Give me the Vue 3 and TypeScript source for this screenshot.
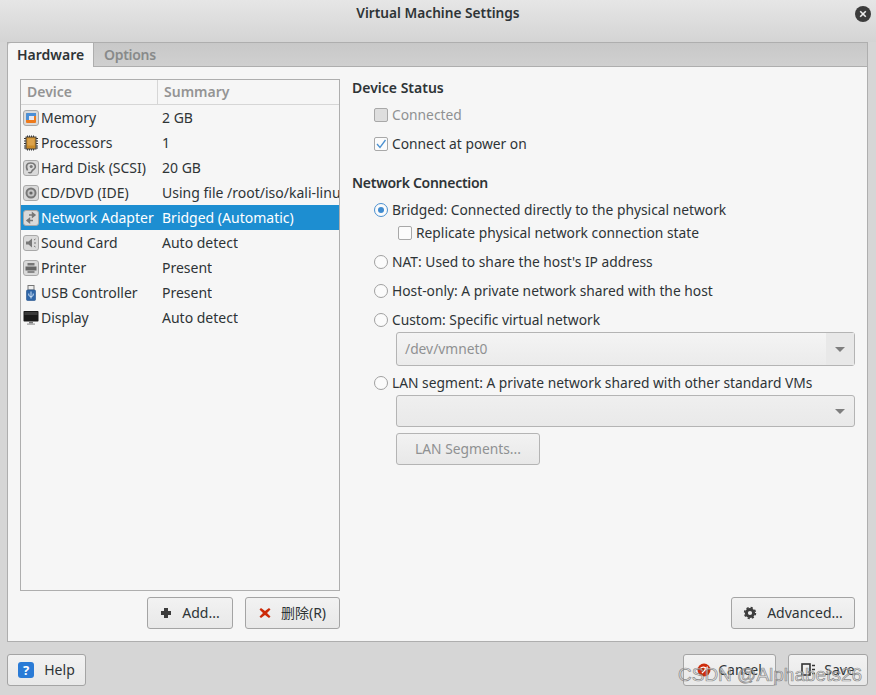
<script setup lang="ts">
interface Device { id: string; name: string; summary: string; selected?: boolean }
const devices: Device[] = [
  { id: 'memory', name: 'Memory', summary: '2 GB' },
  { id: 'cpu', name: 'Processors', summary: '1' },
  { id: 'disk', name: 'Hard Disk (SCSI)', summary: '20 GB' },
  { id: 'cd', name: 'CD/DVD (IDE)', summary: 'Using file /root/iso/kali-linux' },
  { id: 'net', name: 'Network Adapter', summary: 'Bridged (Automatic)', selected: true },
  { id: 'sound', name: 'Sound Card', summary: 'Auto detect' },
  { id: 'printer', name: 'Printer', summary: 'Present' },
  { id: 'usb', name: 'USB Controller', summary: 'Present' },
  { id: 'display', name: 'Display', summary: 'Auto detect' },
]
const framed = ['memory', 'disk', 'cd', 'net', 'sound', 'printer']
</script>

<template>
  <div class="window">
    <header class="titlebar">
      <span class="title">Virtual Machine Settings</span>
      <span class="close">
        <svg width="16" height="16" viewBox="0 0 16 16"><circle cx="8" cy="8" r="8" fill="#3c3c3c" /><path d="M5.2 5.2l5.6 5.6M10.8 5.2l-5.6 5.6" stroke="#eee" stroke-width="1.6" /></svg>
      </span>
    </header>

    <section class="notebook">
      <div class="tabs">
        <div class="tab active">Hardware</div>
        <div class="tab">Options</div>
      </div>
      <div class="page">
        <div class="left">
          <div class="list">
            <div class="list-head">
              <div class="head-device">Device</div>
              <div class="head-summary">Summary</div>
            </div>
            <div v-for="d in devices" :key="d.id" class="row" :class="{ selected: d.selected }">
              <div class="cell-device">
                <svg class="icon" width="16" height="16" viewBox="0 0 16 16">
                  <rect v-if="framed.includes(d.id)" x="0.5" y="0.5" width="15" height="15" rx="2.5" fill="#dadada" stroke="#a8a8a8" />
                  <template v-if="d.id === 'memory'">
                    <rect x="3" y="3" width="10" height="10" rx="1" fill="#ee7a1c" />
                    <path d="M3 4a1 1 0 0 1 1-1h9v3H6v4H3z" fill="#4b8fd6" />
                    <rect x="6" y="6" width="5" height="4" fill="#e8e8f0" />
                  </template>
                  <template v-else-if="d.id === 'cpu'">
                    <path d="M1 3.500h14M1 6h14M1 8.500h14M1 11h14M1 13h14" stroke="#333" stroke-width="1" />
                    <path d="M4.500 .5v15M6.500 .5v15M8.500 .5v15M10.500 .5v15" stroke="#333" stroke-width="1" />
                    <rect x="2.500" y="1.500" width="11" height="13" fill="#444" />
                    <rect x="3.500" y="2.500" width="9" height="11" fill="#c98a28" />
                    <rect x="4.500" y="3.500" width="7" height="7" fill="#dca24a" />
                  </template>
                  <template v-else-if="d.id === 'disk'">
                    <path d="M4.500 10.500c-1.200-2.500-1.500-4-.5-5.800C5 2.600 10.200 2.400 11.800 4.800c1.100 1.800.4 3.600-1 4.400-1.300.7-1.800 1.300-2.300 2.600-.5 1.100-2.300 1.400-3.100.3" fill="none" stroke="#777" stroke-width="1.600" />
                    <circle cx="8.200" cy="6.600" r="1.500" fill="#777" />
                  </template>
                  <template v-else-if="d.id === 'cd'">
                    <circle cx="8" cy="8" r="5.500" fill="#777" />
                    <circle cx="8" cy="8" r="3.500" fill="#c4c4c4" />
                    <circle cx="8" cy="8" r="1.600" fill="#666" />
                  </template>
                  <template v-else-if="d.id === 'net'">
                    <path d="M6 5h5.500M9.500 3l2.500 2-2.500 2zM10 10.500H4.500M6.500 8.500l-2.500 2 2.500 2z" fill="#777" stroke="#777" stroke-width="1.400" />
                  </template>
                  <template v-else-if="d.id === 'sound'">
                    <path d="M3 6.500h2.500L9 3.500v9l-3.500-3H3z" fill="#777" />
                    <path d="M11 5l1.500-1M11 8h2M11 11l1.500 1" stroke="#777" stroke-width="1" />
                  </template>
                  <template v-else-if="d.id === 'printer'">
                    <rect x="4.500" y="3" width="7" height="2.500" fill="#777" />
                    <rect x="2.500" y="6.500" width="11" height="4" fill="#666" />
                    <rect x="4.500" y="11" width="7" height="2" fill="#888" />
                  </template>
                  <template v-else-if="d.id === 'usb'">
                    <rect x="5" y="0.500" width="6" height="4.500" fill="#eee" stroke="#777" />
                    <rect x="3.500" y="5" width="9" height="10.500" rx="1" fill="#2f66a8" stroke="#24508a" stroke-width="0.600" />
                    <path d="M8 6.500v7M5.800 8.500v2l2.200 1.500 2.200-1.500v-2" fill="none" stroke="#cfe2f6" stroke-width="1" />
                  </template>
                  <template v-else-if="d.id === 'display'">
                    <rect x="0.500" y="1" width="15" height="10.500" rx="0.800" fill="#1a1a1a" />
                    <rect x="1.500" y="2" width="13" height="3" fill="#3a3a3a" />
                    <rect x="6" y="11.500" width="4" height="2" fill="#777" />
                    <rect x="4" y="13.500" width="8" height="1.200" fill="#999" />
                  </template>
                </svg>
                <span class="dev-name">{{ d.name }}</span>
              </div>
              <div class="cell-summary">{{ d.summary }}</div>
            </div>
          </div>
          <div class="list-actions">
            <button class="btn add">
              <svg width="12" height="12" viewBox="0 0 12 12"><path d="M4 1h4v3h3v4H8v3H4V8H1V4h3z" fill="#3d3d3d" /></svg>
              <span>Add...</span>
            </button>
            <button class="btn del">
              <svg width="12" height="12" viewBox="0 0 12 12"><path d="M2 1l4 3 4-3 1.500 1.500L8 6l3.500 3.500L10 11 6 8l-4 3-1.500-1.500L4 6 .5 2.500z" fill="#cc2a08" /></svg>
              <span>删除(R)</span>
            </button>
          </div>
        </div>

        <div class="right">
          <h2 class="group-title">Device Status</h2>
          <div class="group">
            <label class="opt disabled"><span class="check off"></span>Connected</label>
            <label class="opt">
              <span class="check">
                <svg width="14" height="14" viewBox="0 0 14 14"><path d="M3 7l3 3.500L11.500 3" fill="none" stroke="#4a90d0" stroke-width="1.300" /></svg>
              </span>Connect at power on
            </label>
          </div>

          <h2 class="group-title second">Network Connection</h2>
          <div class="group net">
            <label class="opt"><span class="radio on"></span>Bridged: Connected directly to the physical network</label>
            <label class="opt sub"><span class="check"></span>Replicate physical network connection state</label>
            <label class="opt"><span class="radio"></span>NAT: Used to share the host's IP address</label>
            <label class="opt"><span class="radio"></span>Host-only: A private network shared with the host</label>
            <label class="opt flush"><span class="radio"></span>Custom: Specific virtual network</label>
            <div class="combo tall"><span class="combo-text">/dev/vmnet0</span><span class="combo-arrow"></span></div>
            <label class="opt flush"><span class="radio"></span>LAN segment: A private network shared with other standard VMs</label>
            <div class="combo"><span class="combo-text"></span><span class="combo-arrow plain"></span></div>
            <button class="btn segments" disabled>LAN Segments...</button>
          </div>

          <div class="right-actions">
            <button class="btn advanced">
              <svg width="14" height="14" viewBox="0 0 14 14"><circle cx="7" cy="7" r="3.600" fill="none" stroke="#3d3d3d" stroke-width="3" /><circle cx="7" cy="7" r="5.400" fill="none" stroke="#3d3d3d" stroke-width="1.600" stroke-dasharray="2.200 2.040" /></svg>
              <span>Advanced...</span>
            </button>
          </div>
        </div>
      </div>
    </section>

    <footer class="footer">
      <button class="btn help">
        <svg width="16" height="16" viewBox="0 0 16 16"><rect width="16" height="16" rx="3" fill="#2a7bd6" /><text x="8" y="12.500" text-anchor="middle" class="q">?</text></svg>
        <span>Help</span>
      </button>
      <div class="footer-right">
        <button class="btn cancel">
          <svg width="14" height="14" viewBox="0 0 14 14"><circle cx="7" cy="7" r="6.500" fill="#cf2c0c" /><path d="M3.500 5.500C5 3.500 8.500 3.800 10 6M10 6l.3-2.500M10 6L7.500 6M5 10l4-4" fill="none" stroke="#fff" stroke-width="1.300" /></svg>
          <span>Cancel</span>
        </button>
        <button class="btn save">
          <svg width="16" height="14" viewBox="0 0 16 14"><rect x="1" y="1" width="8" height="11" fill="none" stroke="#333" stroke-width="1.600" /><path d="M11 2.500h3M11 6.500h3M11 10.500h3" stroke="#333" stroke-width="1.500" /></svg>
          <span>Save</span>
        </button>
      </div>
    </footer>

    <div class="watermark">CSDN @Alphabets26</div>
  </div>
</template>

<style>
html, body { margin: 0; padding: 0; background: #d6d6d6; }
</style>

<style scoped>
.window {
  position: relative;
  width: 876px;
  height: 695px;
  overflow: hidden;
  display: flex;
  flex-direction: column;
  background: #d6d6d6;
  color: #2e3436;
  font-family: "Noto Sans", "Noto Sans CJK SC", sans-serif;
  font-size: 14px;
  line-height: 20px;
}
.titlebar {
  position: relative;
  height: 42px;
  flex: none;
  display: flex;
  align-items: flex-start;
  justify-content: center;
  padding-top: 3px;
  box-sizing: border-box;
  background: linear-gradient(#e6e6e6, #d4d4d4);
}
.title { font-weight: 600; font-size: 13.7px; color: #2e3436; }
.close { position: absolute; left: 855px; top: 6px; width: 16px; height: 16px; display: block; }
.close svg { display: block; }
.notebook {
  flex: none;
  width: 861px;
  height: 600px;
  margin-left: 7px;
  box-sizing: border-box;
  border: 1px solid #aeaeae;
  display: flex;
  flex-direction: column;
  background: #f6f6f6;
}
.tabs {
  height: 24px;
  flex: none;
  box-sizing: border-box;
  display: flex;
  background: linear-gradient(#c8c8c8, #d0d0d0);
  border-bottom: 1px solid #aeaeae;
}
.tab {
  padding: 2px 10px 0;
  font-weight: 600;
  color: #888a8a;
  font-size: 14px;
  letter-spacing: -0.3px;
}
.tab.active {
  height: 24px;
  box-sizing: border-box;
  width: 86px;
  padding-left: 9px;
  color: #2e3436;
  background: #f6f6f6;
  border-right: 1px solid #aeaeae;
  border-radius: 3px 0 0 0;
  letter-spacing: 0;
}
.page {
  flex: 1;
  display: flex;
  padding: 12px;
  min-height: 0;
}
.left { width: 320px; flex: none; display: flex; flex-direction: column; }
.list {
  height: 512px;
  box-sizing: border-box;
  border: 1px solid #aeaeae;
  background: #f6f6f6;
  overflow: hidden;
}
.list-head {
  height: 25px;
  box-sizing: border-box;
  display: flex;
  border-bottom: 1px solid #d6d6d6;
  font-weight: 600;
  color: #949494;
  line-height: 24px;
}
.head-device { width: 137px; padding-left: 6px; box-sizing: border-box; border-right: 1px solid #d6d6d6; }
.head-summary { padding-left: 6px; }
.row { height: 25px; box-sizing: border-box; display: flex; align-items: center; white-space: nowrap; }
.row.selected { background: #1d8ed1; color: #fff; }
.cell-device { width: 137px; flex: none; box-sizing: border-box; padding-left: 2px; display: flex; align-items: center; gap: 2px; }
.cell-summary { padding-left: 4px; overflow: hidden; }
.icon { flex: none; display: block; }
.list-actions { display: flex; justify-content: flex-end; gap: 12px; margin-top: 6px; }
.btn {
  height: 32px;
  box-sizing: border-box;
  border: 1px solid #a4a4a4;
  border-radius: 3px;
  background: linear-gradient(#f2f2f2, #e8e8e8);
  color: #2e3436;
  font: inherit;
  padding: 0;
  display: flex;
  align-items: center;
  justify-content: center;
  gap: 10px;
}
.btn svg { flex: none; display: block; }
.add { width: 86px; }
.del { width: 95px; }
.right { flex: 1; margin-left: 12px; margin-top: -1px; display: flex; flex-direction: column; position: relative; }
.group-title { margin: 0; font-size: 14px; line-height: 20px; font-weight: 600; color: #2e3436; }
.group-title.second { margin-top: 17px; letter-spacing: -0.28px; }
.group { display: flex; flex-direction: column; gap: 5px; padding-left: 22px; margin-top: 5px; font-size: 13.8px; }
.opt { height: 24px; display: flex; align-items: center; gap: 4px; white-space: nowrap; }
.opt.disabled { color: #8f9192; }
.opt.sub { margin-left: 24px; margin-top: -6px; }
.opt.flush + .combo { margin-top: -5px; margin-left: 22px; }
.check {
  width: 14px; height: 14px; flex: none; box-sizing: border-box;
  border: 1px solid #a8a8a8; border-radius: 2px; background: #fbfbfb;
  display: flex; align-items: center; justify-content: center;
}
.check svg { flex: none; margin: -1px; }
.check.off { background: #dedede; }
.radio {
  width: 14px; height: 14px; flex: none; box-sizing: border-box;
  border: 1px solid #a0a0a0; border-radius: 50%; background: #fbfbfb;
  position: relative;
}
.radio.on { border-color: #4a90d0; }
.radio.on::after {
  content: ""; position: absolute; left: 3px; top: 3px; width: 6px; height: 6px;
  border-radius: 50%; background: #3f8bd0;
}
.combo {
  height: 32px;
  width: 459px;
  box-sizing: border-box;
  border: 1px solid #b4b4b4;
  border-radius: 3px;
  background: linear-gradient(#efefef, #e9e9e9);
  display: flex;
  align-items: center;
  color: #8f9192;
}
.combo.tall { height: 34px; background: linear-gradient(#f4f4f4, #ebebeb); }
.combo-text { flex: 1; padding-left: 8px; }
.combo-arrow {
  width: 28px; align-self: stretch; flex: none; position: relative;
  background: #e8e8e8;
}
.combo-arrow.plain { background: none; }
.combo-arrow::after {
  content: ""; position: absolute; left: 9px; top: 50%; margin-top: -2px;
  border-left: 5px solid transparent; border-right: 5px solid transparent;
  border-top: 5px solid #7e7e7e;
}
.segments { width: 144px; margin-top: 1px; margin-left: 22px; color: #8f9192; border-color: #b4b4b4; }
.right-actions { margin-top: auto; display: flex; justify-content: flex-end; }
.advanced { width: 124px; }
.footer {
  flex: none;
  display: flex;
  justify-content: space-between;
  padding: 12px 8px 0 7px;
}
.footer-right { display: flex; gap: 12px; }
.help { width: 79px; }
.cancel { width: 93px; gap: 7px; }
.save { width: 80px; gap: 7px; }
.q { font: 700 13px "Noto Sans", sans-serif; fill: #fff; }
.watermark {
  position: absolute;
  left: 678px;
  top: 663px;
  font-family: "Liberation Sans", sans-serif;
  font-size: 19px;
  line-height: 24px;
  white-space: nowrap;
  color: rgba(225, 225, 225, 0.6);
  -webkit-text-stroke: 0.7px rgba(95, 95, 95, 0.7);
}
</style>
